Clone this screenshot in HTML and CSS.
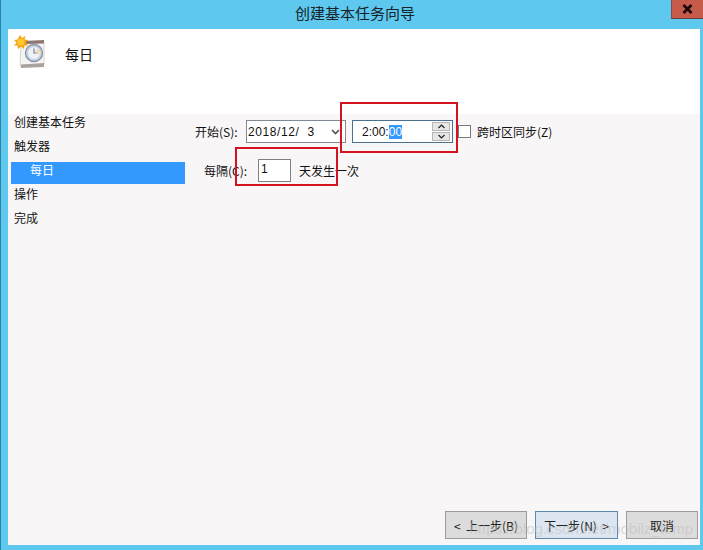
FILE: index.html
```html
<!DOCTYPE html>
<html lang="zh">
<head>
<meta charset="utf-8">
<title>创建基本任务向导</title>
<link rel="stylesheet" href="styles.css">
</head>
<body>
<div class="window">
  <div class="titlebar">
    <span class="title">创建基本任务向导</span>
    <span class="close"><svg width="11" height="10" viewBox="0 0 11 10"><path d="M1.5 1 L9.5 9 M9.5 1 L1.5 9" stroke="#1a0606" stroke-width="2.6" fill="none"/></svg></span>
  </div>
  <div class="client">
    <div class="header">
      <svg class="task-icon" width="34" height="34" viewBox="0 0 34 34">
        <path d="M7 9 L30 7 L30 30 L6 31 Z" fill="#f6f4f1" stroke="#d8d4cf"/>
        <path d="M7 29.5 L30 28 L30 32 L7 33 Z" fill="#a9a3a0"/>
        <path d="M9 6 L30 5 L30 8.5 L9 9 Z" fill="#8f7670"/>
        <circle cx="20" cy="18" r="8.5" fill="#c9d3e2" stroke="#8795ac" stroke-width="1.4"/>
        <circle cx="20" cy="18" r="6" fill="#eef1f5"/>
        <path d="M20 13.5 V18 H24" stroke="#7d8494" stroke-width="1.2" fill="none"/>
        <path d="M23 14 L26 16 L25 19 L22 18 Z" fill="#f3d9a0"/>
        <path d="M6 0 L8 3 L11.5 1 L10.5 4.5 L14.5 5 L11.5 7.5 L14 10.5 L10.5 10.5 L10 14 L7 11.5 L4 14 L3.5 10.5 L0 10.5 L2.5 7.5 L0 5 L3.5 4.5 Z" fill="#f5a50f"/>
        <circle cx="7" cy="7" r="3.6" fill="#ffc832"/>
      </svg>
      <span class="heading">每日</span>
    </div>
    <div class="body">
      <nav class="steps">
        <div class="step">创建基本任务</div>
        <div class="step">触发器</div>
        <div class="step sub active">每日</div>
        <div class="step">操作</div>
        <div class="step">完成</div>
      </nav>
      <main class="panel">
        <div class="row row-start">
          <span class="label">开始(S):</span>
          <div class="field date">
            <span>2018/12/&nbsp; 3</span>
            <svg class="chev" width="9" height="6" viewBox="0 0 9 6"><path d="M1 1 L4.5 4.5 L8 1" stroke="#555" stroke-width="1.7" fill="none"/></svg>
          </div>
          <div class="field time">
            <span class="time-text">2:00:<span class="sel">00</span></span>
            <div class="spin">
              <span class="spin-btn"><svg width="7" height="5" viewBox="0 0 7 5"><path d="M0.5 4 L3.5 1 L6.5 4" stroke="#222" stroke-width="1.2" fill="none"/></svg></span>
              <span class="spin-btn"><svg width="7" height="5" viewBox="0 0 7 5"><path d="M0.5 1 L3.5 4 L6.5 1" stroke="#222" stroke-width="1.2" fill="none"/></svg></span>
            </div>
          </div>
          <span class="check"></span>
          <span class="check-label">跨时区同步(Z)</span>
        </div>
        <div class="row row-every">
          <span class="label">每隔(C):</span>
          <div class="field days">1</div>
          <span class="after">天发生一次</span>
        </div>
      </main>
    </div>
    <div class="footer">
      <button class="btn">&lt;&nbsp; 上一步(B)</button>
      <button class="btn primary">下一步(N)&nbsp; &gt;</button>
      <button class="btn cancel">取消</button>
    </div>
    <span class="watermark">https://blog.csdn.net/mobilz_temp</span>
  </div>
  <span class="mark mark-time"></span>
  <span class="mark mark-days"></span>
</div>
</body>
</html>
```
FILE: styles.css
```css
* { box-sizing: border-box; }
html, body { margin: 0; padding: 0; }
body {
  width: 703px;
  height: 550px;
  overflow: hidden;
  font-family: "Noto Sans CJK SC", "Liberation Sans", sans-serif;
  font-size: 12px;
  color: #111;
}
.window {
  position: relative;
  width: 703px;
  height: 550px;
  background: #5ec8ee;
  border-left: 1px solid #2c7fa6;
  display: flex;
  flex-direction: column;
  padding: 0 3px 5px 7px;
}
.titlebar {
  height: 29px;
  flex: none;
  position: relative;
  display: flex;
  justify-content: center;
  align-items: center;
  padding: 0 0 5px 2px;
  font-size: 15px;
}
.title { color: #16232b; }
.close {
  position: absolute;
  top: 0;
  right: -3px;
  width: 32px;
  height: 19px;
  background: #c75b4b;
  border-left: 1px solid #8a4a44;
  border-bottom: 1px solid #6a3f3e;
  display: flex;
  align-items: center;
  justify-content: center;
}
.client {
  position: relative;
  flex: 1;
  display: flex;
  flex-direction: column;
  background: #f9f6f8;
  min-height: 0;
}
.header {
  height: 85px;
  flex: none;
  background: #fff;
  display: flex;
  align-items: flex-start;
  padding: 6px 0 0 6px;
}
.task-icon { flex: none; }
.heading {
  font-size: 14px;
  margin: 9px 0 0 17px;
  line-height: 20px;
}
.body {
  flex: 1;
  display: flex;
  min-height: 0;
}
.steps {
  width: 177px;
  flex: none;
  padding: 0 0 0 3px;
}
.step {
  height: 24px;
  line-height: 16px;
  padding-left: 3px;
  white-space: nowrap;
}
.step.sub {
  padding-left: 19px;
}
.active {
  background: #3399ff;
  color: #fff;
  height: 22px;
  line-height: 16px;
  margin-bottom: 2px;
}
.panel {
  flex: 1;
  padding: 6px 0 0 10px;
}
.row {
  display: flex;
  align-items: center;
}
.row-start { height: 22px; }
.row-every { height: 24px; margin-top: 16px; padding-left: 9px; }
.label { white-space: nowrap; }
.row-start .label { width: 51px; }
.row-every .label { width: 54px; }
.field {
  height: 23px;
  background: #fff;
  border: 1px solid #7f8a96;
  display: flex;
  align-items: center;
  font-family: "Liberation Sans", sans-serif;
  font-size: 12px;
}
.date {
  width: 100px;
  justify-content: space-between;
  padding: 2px 5px 0 1px;
  letter-spacing: 0.6px;
}
.chev { flex: none; }
.time {
  width: 101px;
  margin-left: 6px;
  padding: 0 2px 0 9px;
  border-color: #4a6f8f;
  justify-content: space-between;
}
.time-text { padding-top: 2px; }
.sel { background: #3399ff; color: #fff; display: inline-block; line-height: 14px; }
.spin {
  display: flex;
  flex-direction: column;
  gap: 1px;
}
.spin-btn {
  width: 18px;
  height: 9px;
  background: #e6e6e6;
  border: 1px solid #b5b5b5;
  display: flex;
  align-items: center;
  justify-content: center;
}
.check {
  width: 13px;
  height: 13px;
  margin-left: 5px;
  background: #fff;
  border: 1px solid #7a7a7a;
}
.check-label { margin-left: 6px; white-space: nowrap; }
.days {
  width: 33px;
  height: 23px;
  border-color: #808080;
  padding: 0 0 3px 2px;
}
.after { margin-left: 8px; white-space: nowrap; }
.footer {
  flex: none;
  height: 34px;
  display: flex;
  justify-content: flex-end;
  gap: 8px;
  padding: 0 2px 0 0;
}
.btn {
  width: 82px;
  height: 28px;
  padding: 0;
  font: inherit;
  font-size: 12px;
  color: #222;
  background: #dcdcdc;
  border: 1px solid #9c9c9c;
}
.btn.primary { width: 83px; background: #dde6f0; border-color: #5c89b0; }
.btn.cancel { width: 72px; }
.watermark {
  position: absolute;
  right: 7px;
  bottom: 8px;
  font-family: "Liberation Sans", sans-serif;
  font-size: 15px;
  color: rgba(190, 190, 190, 0.55);
  white-space: nowrap;
  pointer-events: none;
}
.mark {
  position: absolute;
  border: 2px solid #d5121f;
  pointer-events: none;
}
.mark-time { left: 339px; top: 102px; width: 118px; height: 51px; }
.mark-days { left: 234px; top: 147px; width: 103px; height: 39px; }
```
